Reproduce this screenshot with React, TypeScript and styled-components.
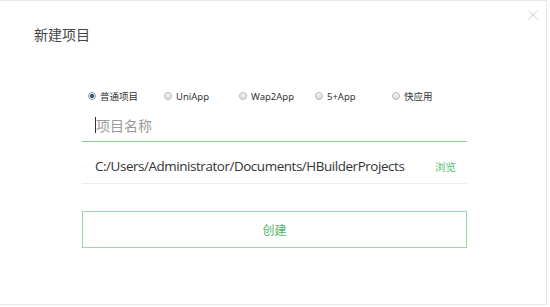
import React, { useState } from "react";
import styled, { createGlobalStyle } from "styled-components";

// ---------- Global ----------

const GlobalStyle = createGlobalStyle`
  html, body {
    margin: 0;
    padding: 0;
    background: #ffffff;
  }
  body {
    font-family: "Noto Sans", "Noto Sans CJK SC", sans-serif;
    color: #333;
  }
`;

// ---------- Styled Components ----------

const Dialog = styled.div`
  position: relative;
  box-sizing: border-box;
  width: 547px;
  height: 305px;
  border: 1px solid #e8e8e8;
  border-left: none;
  background: #fff;
`;

const Title = styled.h1`
  margin: 0;
  padding: 25px 0 0 34px;
  font-size: 14px;
  font-weight: normal;
  line-height: 18px;
  color: #444;
`;

const CloseButton = styled.button`
  position: absolute;
  top: 8px;
  right: 7px;
  width: 12px;
  height: 12px;
  padding: 0;
  border: none;
  background: transparent;
  display: flex;
  align-items: center;
  justify-content: center;
  cursor: pointer;
`;

const Form = styled.div`
  width: 385px;
  margin: 44px 0 0 82px;
  display: flex;
  flex-direction: column;
`;

const RadioRow = styled.div`
  display: flex;
  align-items: center;
  padding-left: 6px;
  height: 16px;
`;

const RadioOption = styled.label<{ $width: number }>`
  display: flex;
  align-items: center;
  width: ${(p) => p.$width}px;
  font-size: 9.5px;
  color: #333;
  cursor: pointer;
`;

const RadioDot = styled.span<{ $checked: boolean }>`
  box-sizing: border-box;
  width: 8px;
  height: 8px;
  border-radius: 50%;
  margin-right: 4px;
  border: 1px solid ${(p) => (p.$checked ? "#8a9aa8" : "#b8b8b8")};
  background: ${(p) =>
    p.$checked
      ? "radial-gradient(circle, #3b5670 0 1.8px, #e9eef3 2.3px)"
      : "linear-gradient(#f4f4f4, #dcdcdc)"};
`;

const NameField = styled.div`
  margin-top: 5px;
  height: 32px;
  border-bottom: 1px solid #84cc96;
  display: flex;
  align-items: center;
  padding-left: 13px;
`;

const Caret = styled.span`
  width: 1px;
  height: 16px;
  background: #333;
`;

const Placeholder = styled.span`
  font-size: 14px;
  color: #9a9a9a;
`;

const PathRow = styled.div`
  box-sizing: border-box;
  height: 42px;
  padding: 7px 11px 0 13px;
  border-bottom: 1px solid #ececec;
  display: flex;
  align-items: center;
  justify-content: space-between;
`;

const PathText = styled.span`
  font-family: "Open Sans", "Noto Sans", sans-serif;
  font-size: 13.4px;
  color: #333;
  letter-spacing: -0.42px;
`;

const BrowseLink = styled.span`
  font-size: 10.5px;
  color: #5cbf72;
  cursor: pointer;
`;

const CreateButton = styled.button`
  margin-top: 27px;
  height: 37px;
  border: 1px solid #9ad8a8;
  background: #fff;
  color: #4fb866;
  font-family: "Noto Sans CJK SC", sans-serif;
  font-size: 12px;
  cursor: pointer;
`;

// ---------- Data ----------

const projectTypes = [
  { label: "普通项目", width: 76 },
  { label: "UniApp", width: 75 },
  { label: "Wap2App", width: 76 },
  { label: "5+App", width: 77 },
  { label: "快应用", width: 60 },
];

// ---------- App ----------

export default function App() {
  const [selected, setSelected] = useState(0);

  return (
    <>
      <GlobalStyle />
      <Dialog>
        <Title>新建项目</Title>
        <CloseButton aria-label="close">
          <svg width="10" height="10" viewBox="0 0 10 10">
            <path d="M0.5 0.5 L9.5 9.5 M9.5 0.5 L0.5 9.5" stroke="#cfcfcf" strokeWidth="1" />
          </svg>
        </CloseButton>
        <Form>
          <RadioRow>
            {projectTypes.map((t, i) => (
              <RadioOption key={t.label} $width={t.width} onClick={() => setSelected(i)}>
                <RadioDot $checked={selected === i} />
                {t.label}
              </RadioOption>
            ))}
          </RadioRow>
          <NameField>
            <Caret />
            <Placeholder>项目名称</Placeholder>
          </NameField>
          <PathRow>
            <PathText>C:/Users/Administrator/Documents/HBuilderProjects</PathText>
            <BrowseLink>浏览</BrowseLink>
          </PathRow>
          <CreateButton>创建</CreateButton>
        </Form>
      </Dialog>
    </>
  );
}
